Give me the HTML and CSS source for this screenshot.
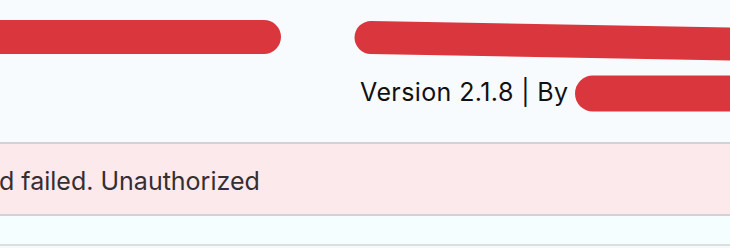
FILE: index.html
```html
<!DOCTYPE html>
<html lang="en">
<head>
<meta charset="utf-8">
<title>Plugin info</title>
<link rel="stylesheet" href="styles.css">
</head>
<body>
<div class="page">
  <header class="hero">
    <svg class="redact" width="730" height="142" viewBox="0 0 730 142" aria-hidden="true">
      <path d="M -30 37 L 264 37" />
      <path class="w33" d="M 371 37.5 L 780 45" />
      <path class="w36" d="M 593 93.5 L 780 93.5" />
    </svg>
    <h1 class="title"></h1>
    <p class="meta"><span class="ver">Version 2.1.8 | By</span></p>
  </header>
  <div class="alert"><p class="alert-text">d failed. Unauthorized</p></div>
  <div class="strip"></div>
  <div class="rest"></div>
</div>
</body>
</html>
```

FILE: styles.css
```css
html, body {
  margin: 0;
  padding: 0;
  background: #f8fbfe;
  overflow: hidden;
}
.page {
  width: 730px;
  display: flex;
  flex-direction: column;
  font-family: Inter, "Liberation Sans", sans-serif;
}
.hero {
  position: relative;
  height: 142px;
  background: #f8fbfe;
}
.redact {
  position: absolute;
  left: 0;
  top: 0;
}
.redact path {
  fill: none;
  stroke: #da363d;
  stroke-width: 34;
  stroke-linecap: round;
}
.redact path.w33 { stroke-width: 33; }
.redact path.w36 { stroke-width: 36; }
.title {
  margin: 0;
  height: 77px;
}
.meta {
  margin: 0;
  padding-left: 360px;
  font-size: 25px;
  line-height: 30px;
  letter-spacing: 0.4px;
  color: #111114;
  white-space: nowrap;
}
.alert {
  border-top: 2px solid #d2d1d5;
  border-bottom: 2px solid #d2d1d5;
  background: #fbe9ec;
  height: 70px;
  box-sizing: content-box;
}
.alert-text {
  margin: 22px 0 0 -1px;
  font-size: 25px;
  line-height: 30px;
  color: #352e32;
  white-space: nowrap;
}
.strip {
  height: 28px;
  background: #f5fefe;
  border-bottom: 2px solid #dcdfe0;
}
.rest {
  height: 10px;
  background: #f5fbfb;
}
```
